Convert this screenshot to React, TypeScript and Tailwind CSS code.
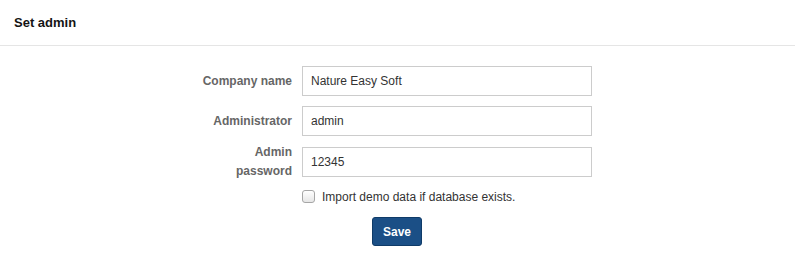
import React from 'react';

const fields = [
  { label: 'Company name', value: 'Nature Easy Soft' },
  { label: 'Administrator', value: 'admin' },
  { label: 'Admin password', value: '12345' },
];

const App: React.FC = () => {
  return (
    <div className="w-[795px] h-[264px] bg-white text-[12px] text-[#333] font-['Liberation_Sans',Arial,sans-serif]">
      <div className="h-[46px] border-b border-[#e5e5e5] flex items-center pl-[14px]">
        <h2 className="font-bold text-[13px] text-[#141414]">Set admin</h2>
      </div>

      <div className="pl-[198px] pt-[20px]">
        <div className="flex flex-col">
          {fields.map((f, i) => (
            <div key={f.label} className={`flex items-center h-[30px] ${i === 0 ? '' : i === 1 ? 'mt-[10px]' : 'mt-[11px]'}`}>
              <label className="w-[94px] text-right font-bold text-[#666] leading-[19px]">{f.label}</label>
              <div className="ml-[10px] w-[290px] h-[30px] border border-[#ccc] flex items-center px-[8px] text-[#333]">
                {f.value}
              </div>
            </div>
          ))}
        </div>

        <div className="mt-[13px] ml-[104px] flex items-center h-[13px]">
          <span className="w-[13px] h-[13px] rounded-[3px] border border-[#a6a6a6] bg-gradient-to-b from-[#fff] to-[#e6e6e6]" />
          <span className="ml-[7px] text-[#333]">Import demo data if database exists.</span>
        </div>

        <div className="mt-[14px] ml-[174px]">
          <button className="w-[50px] h-[29px] rounded-[3px] bg-[#1b4f86] border border-[#0f3b68] text-white font-bold text-[12px]">
            Save
          </button>
        </div>
      </div>
    </div>
  );
};

export default App;
